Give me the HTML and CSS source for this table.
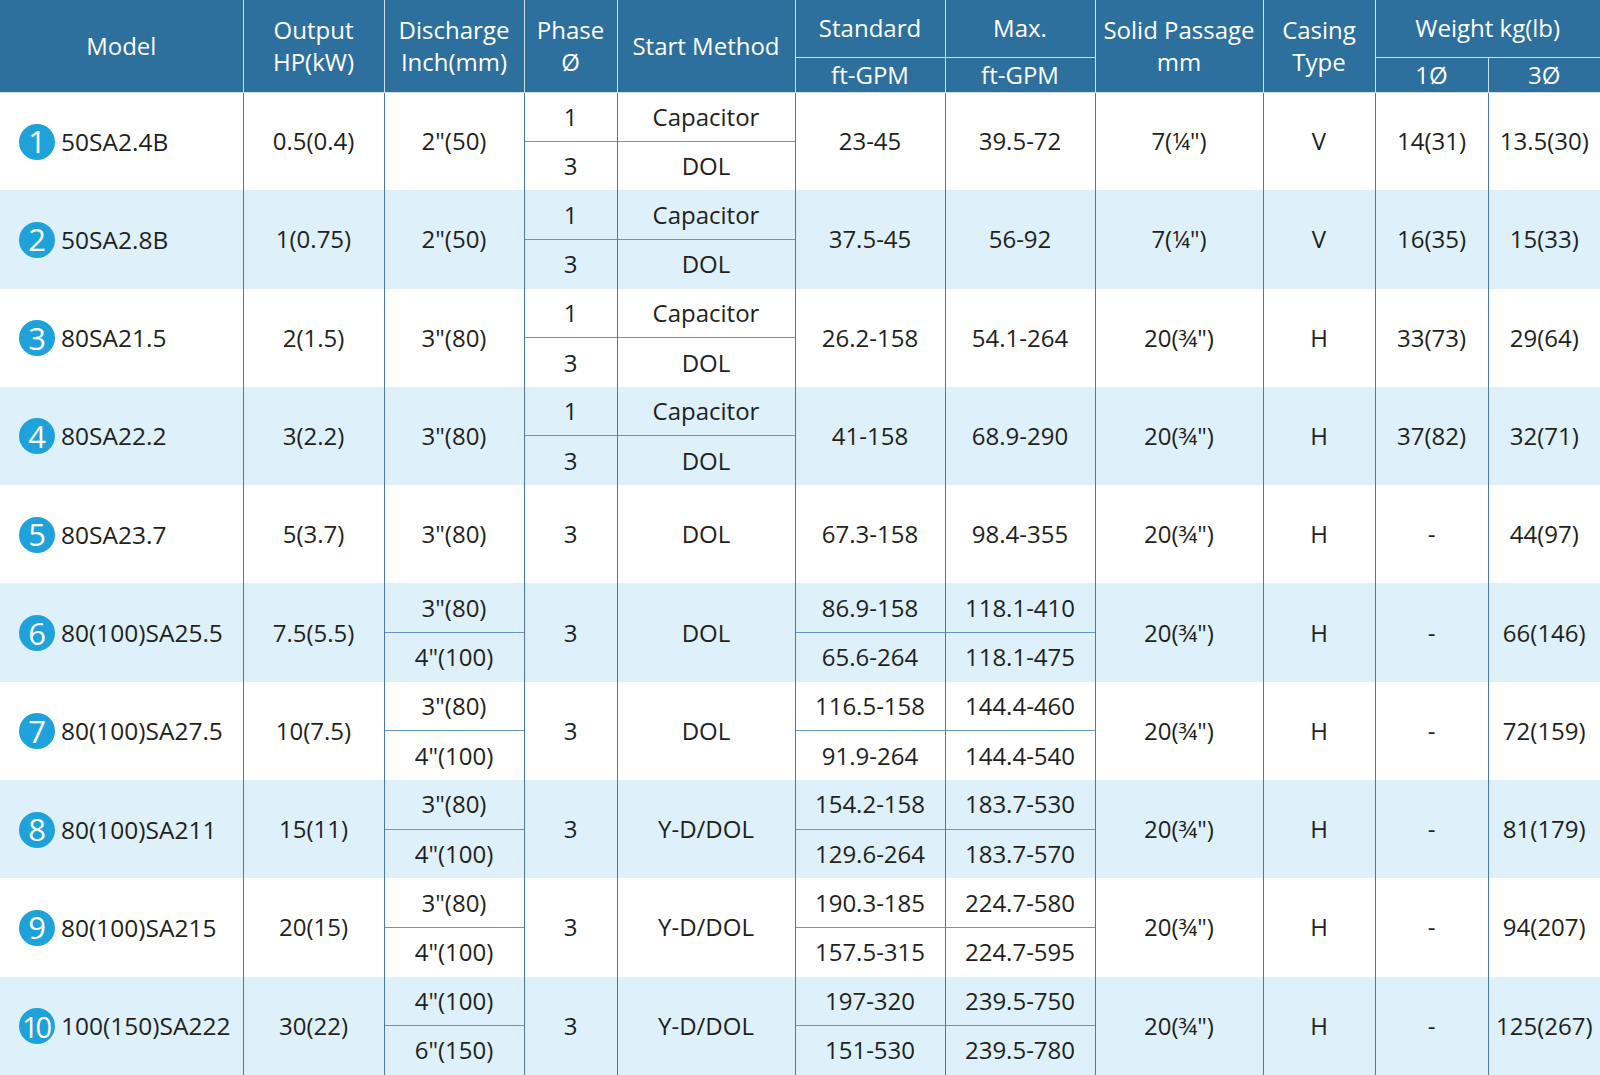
FILE: index.html
```html
<!DOCTYPE html>
<html>
<head>
<meta charset="utf-8">
<link rel="stylesheet" href="styles.css">
</head>
<body>
<table class="spec">
  <colgroup>
    <col class="c-model"><col class="c-out"><col class="c-dis"><col class="c-ph"><col class="c-start">
    <col class="c-std"><col class="c-max"><col class="c-solid"><col class="c-case"><col class="c-w1"><col class="c-w3">
  </colgroup>
  <thead>
    <tr class="h1">
      <th rowspan="2" class="first">Model</th>
      <th rowspan="2">Output<br>HP(kW)</th>
      <th rowspan="2">Discharge<br>Inch(mm)</th>
      <th rowspan="2">Phase<br>Ø</th>
      <th rowspan="2">Start Method</th>
      <th>Standard</th>
      <th>Max.</th>
      <th rowspan="2">Solid Passage<br>mm</th>
      <th rowspan="2">Casing<br>Type</th>
      <th colspan="2" class="last">Weight kg(lb)</th>
    </tr>
    <tr class="h2">
      <th>ft-GPM</th>
      <th>ft-GPM</th>
      <th>1Ø</th>
      <th class="last">3Ø</th>
    </tr>
  </thead>
  <tbody>
    <!-- 1 -->
    <tr>
      <td rowspan="2" class="model"><div class="mcell"><span class="num">1</span><span>50SA2.4B</span></div></td>
      <td rowspan="2">0.5(0.4)</td>
      <td rowspan="2">2"(50)</td>
      <td>1</td><td>Capacitor</td>
      <td rowspan="2">23-45</td><td rowspan="2">39.5-72</td>
      <td rowspan="2">7(¼")</td><td rowspan="2">V</td>
      <td rowspan="2">14(31)</td><td rowspan="2">13.5(30)</td>
    </tr>
    <tr><td class="split">3</td><td class="split">DOL</td></tr>
    <!-- 2 -->
    <tr class="alt">
      <td rowspan="2" class="model"><div class="mcell"><span class="num">2</span><span>50SA2.8B</span></div></td>
      <td rowspan="2">1(0.75)</td>
      <td rowspan="2">2"(50)</td>
      <td>1</td><td>Capacitor</td>
      <td rowspan="2">37.5-45</td><td rowspan="2">56-92</td>
      <td rowspan="2">7(¼")</td><td rowspan="2">V</td>
      <td rowspan="2">16(35)</td><td rowspan="2">15(33)</td>
    </tr>
    <tr class="alt"><td class="split">3</td><td class="split">DOL</td></tr>
    <!-- 3 -->
    <tr>
      <td rowspan="2" class="model"><div class="mcell"><span class="num">3</span><span>80SA21.5</span></div></td>
      <td rowspan="2">2(1.5)</td>
      <td rowspan="2">3"(80)</td>
      <td>1</td><td>Capacitor</td>
      <td rowspan="2">26.2-158</td><td rowspan="2">54.1-264</td>
      <td rowspan="2">20(¾")</td><td rowspan="2">H</td>
      <td rowspan="2">33(73)</td><td rowspan="2">29(64)</td>
    </tr>
    <tr><td class="split">3</td><td class="split">DOL</td></tr>
    <!-- 4 -->
    <tr class="alt">
      <td rowspan="2" class="model"><div class="mcell"><span class="num">4</span><span>80SA22.2</span></div></td>
      <td rowspan="2">3(2.2)</td>
      <td rowspan="2">3"(80)</td>
      <td>1</td><td>Capacitor</td>
      <td rowspan="2">41-158</td><td rowspan="2">68.9-290</td>
      <td rowspan="2">20(¾")</td><td rowspan="2">H</td>
      <td rowspan="2">37(82)</td><td rowspan="2">32(71)</td>
    </tr>
    <tr class="alt"><td class="split">3</td><td class="split">DOL</td></tr>
    <!-- 5 -->
    <tr>
      <td rowspan="2" class="model"><div class="mcell"><span class="num">5</span><span>80SA23.7</span></div></td>
      <td rowspan="2">5(3.7)</td>
      <td rowspan="2">3"(80)</td>
      <td rowspan="2">3</td><td rowspan="2">DOL</td>
      <td rowspan="2">67.3-158</td><td rowspan="2">98.4-355</td>
      <td rowspan="2">20(¾")</td><td rowspan="2">H</td>
      <td rowspan="2">-</td><td rowspan="2">44(97)</td>
    </tr>
    <tr></tr>
    <!-- 6 -->
    <tr class="alt">
      <td rowspan="2" class="model"><div class="mcell"><span class="num">6</span><span>80(100)SA25.5</span></div></td>
      <td rowspan="2">7.5(5.5)</td>
      <td>3"(80)</td>
      <td rowspan="2">3</td><td rowspan="2">DOL</td>
      <td>86.9-158</td><td>118.1-410</td>
      <td rowspan="2">20(¾")</td><td rowspan="2">H</td>
      <td rowspan="2">-</td><td rowspan="2">66(146)</td>
    </tr>
    <tr class="alt"><td class="split">4"(100)</td><td class="split">65.6-264</td><td class="split">118.1-475</td></tr>
    <!-- 7 -->
    <tr>
      <td rowspan="2" class="model"><div class="mcell"><span class="num">7</span><span>80(100)SA27.5</span></div></td>
      <td rowspan="2">10(7.5)</td>
      <td>3"(80)</td>
      <td rowspan="2">3</td><td rowspan="2">DOL</td>
      <td>116.5-158</td><td>144.4-460</td>
      <td rowspan="2">20(¾")</td><td rowspan="2">H</td>
      <td rowspan="2">-</td><td rowspan="2">72(159)</td>
    </tr>
    <tr><td class="split">4"(100)</td><td class="split">91.9-264</td><td class="split">144.4-540</td></tr>
    <!-- 8 -->
    <tr class="alt">
      <td rowspan="2" class="model"><div class="mcell"><span class="num">8</span><span>80(100)SA211</span></div></td>
      <td rowspan="2">15(11)</td>
      <td>3"(80)</td>
      <td rowspan="2">3</td><td rowspan="2">Y-D/DOL</td>
      <td>154.2-158</td><td>183.7-530</td>
      <td rowspan="2">20(¾")</td><td rowspan="2">H</td>
      <td rowspan="2">-</td><td rowspan="2">81(179)</td>
    </tr>
    <tr class="alt"><td class="split">4"(100)</td><td class="split">129.6-264</td><td class="split">183.7-570</td></tr>
    <!-- 9 -->
    <tr>
      <td rowspan="2" class="model"><div class="mcell"><span class="num">9</span><span>80(100)SA215</span></div></td>
      <td rowspan="2">20(15)</td>
      <td>3"(80)</td>
      <td rowspan="2">3</td><td rowspan="2">Y-D/DOL</td>
      <td>190.3-185</td><td>224.7-580</td>
      <td rowspan="2">20(¾")</td><td rowspan="2">H</td>
      <td rowspan="2">-</td><td rowspan="2">94(207)</td>
    </tr>
    <tr><td class="split">4"(100)</td><td class="split">157.5-315</td><td class="split">224.7-595</td></tr>
    <!-- 10 -->
    <tr class="alt">
      <td rowspan="2" class="model"><div class="mcell"><span class="num ten">10</span><span>100(150)SA222</span></div></td>
      <td rowspan="2">30(22)</td>
      <td>4"(100)</td>
      <td rowspan="2">3</td><td rowspan="2">Y-D/DOL</td>
      <td>197-320</td><td>239.5-750</td>
      <td rowspan="2">20(¾")</td><td rowspan="2">H</td>
      <td rowspan="2">-</td><td rowspan="2">125(267)</td>
    </tr>
    <tr class="alt"><td class="split">6"(150)</td><td class="split">151-530</td><td class="split">239.5-780</td></tr>
  </tbody>
</table>
</body>
</html>
```
FILE: styles.css
```css
html, body {
  margin: 0;
  padding: 0;
  background: #ffffff;
}
body {
  width: 1600px;
  height: 1075px;
  overflow: hidden;
  font-family: "Open Sans", "Noto Sans", "Liberation Sans", sans-serif;
  color: #231f20;
}
.spec {
  width: 1600px;
  table-layout: fixed;
  border-collapse: collapse;
  border-spacing: 0;
  font-size: 24px;
}
.c-model { width: 243px; }
.c-out { width: 141px; }
.c-dis { width: 140px; }
.c-ph { width: 93px; }
.c-start { width: 178px; }
.c-std { width: 150px; }
.c-max { width: 150px; }
.c-solid { width: 168px; }
.c-case { width: 112px; }
.c-w1 { width: 113px; }
.c-w3 { width: 112px; }

.spec th {
  background: #2d709e;
  color: #ffffff;
  font-weight: 400;
  line-height: 32px;
  padding: 0;
  text-align: center;
  vertical-align: middle;
  border: 1px solid #cfe0ec;
  white-space: nowrap;
}
.spec th.first { border-left: none; }
.spec th.last { border-right: none; }
.spec thead tr:first-child th { border-top: none; }
.h1 { height: 57px; }
.h2 { height: 35px; }

.spec td {
  padding: 0;
  height: 48.15px;
  text-align: center;
  vertical-align: middle;
  white-space: nowrap;
  line-height: 30px;
  border-left: 1px solid #4b7aaa;
  border-right: 1px solid #4b7aaa;
}
.spec tbody tr { height: 49.15px; }
.spec tr.alt td { background: #def0fa; }
.spec td.split { border-top: 1px solid #6796c4; }
.spec td.model {
  text-align: left;
  border-left: none;
  padding-left: 19px;
}
.spec tbody tr td:last-child { border-right: none; }

.mcell {
  display: flex;
  align-items: center;
  gap: 6px;
  font-size: 24.5px;
  padding-top: 1px;
}

.num {
  flex: none;
  width: 36px;
  height: 36px;
  border-radius: 50%;
  background: #1fa2da;
  color: #ffffff;
  display: flex;
  align-items: center;
  justify-content: center;
  font-size: 31px;
  line-height: 1;
  font-weight: 500;
}
.num.ten { letter-spacing: -3px; text-indent: -3px; font-size: 29px; }
```
